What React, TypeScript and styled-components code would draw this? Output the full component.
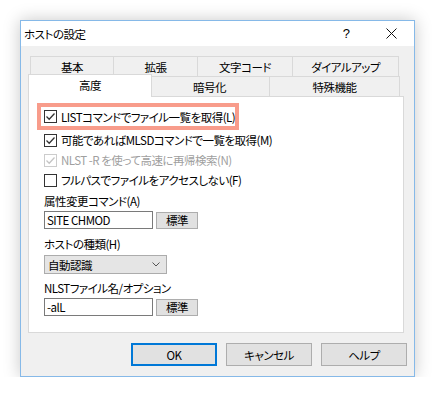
import styled, { createGlobalStyle } from 'styled-components';

const GlobalStyle = createGlobalStyle`
  html, body {
    margin: 0;
    background: #ffffff;
  }
  body {
    font-family: "Noto Sans CJK JP", "Noto Sans", sans-serif;
    font-size: 11.5px;
    letter-spacing: -0.5px;
    font-feature-settings: "palt";
    color: #000;
  }
`;

const rowOne = [
  { label: '基本', width: 84 },
  { label: '拡張', width: 85 },
  { label: '文字コード', width: 96 },
  { label: 'ダイアルアップ', width: 107 },
];

const rowTwo = [
  { label: '高度', width: 120, active: true },
  { label: '暗号化', width: 121 },
  { label: '特殊機能', width: 131 },
];

const checks = [
  { label: '可能であればMLSDコマンドで一覧を取得(M)', checked: true },
  { label: 'NLST -R を使って高速に再帰検索(N)', checked: true, disabled: true },
  { label: 'フルパスでファイルをアクセスしない(F)', checked: false },
];

function CheckBox(props: { checked: boolean; disabled?: boolean }) {
  return (
    <Box $disabled={props.disabled}>
      {props.checked && (
        <svg width="11" height="11" viewBox="0 0 11 11">
          <path
            d="M1.5 5.5 L4.2 8.2 L9.5 2.5"
            fill="none"
            stroke={props.disabled ? '#c4c4c4' : '#333'}
            strokeWidth="1.3"
          />
        </svg>
      )}
    </Box>
  );
}

function App() {
  return (
    <Page>
      <GlobalStyle />
      <Window>
        <TitleBar>
          <Title>ホストの設定</Title>
          <HelpButton>?</HelpButton>
          <CloseButton>
            <svg width="11" height="11" viewBox="0 0 11 11">
              <path d="M0.5 0.5 L10.5 10.5 M10.5 0.5 L0.5 10.5" stroke="#111" strokeWidth="1" />
            </svg>
          </CloseButton>
        </TitleBar>
        <Body>
          <TabStrip>
            <TabRow>
              {rowOne.map((t) => (
                <Tab key={t.label} $width={t.width}>
                  {t.label}
                </Tab>
              ))}
            </TabRow>
            <TabRow>
              {rowTwo.map((t) => (
                <Tab key={t.label} $width={t.width} $active={t.active}>
                  {t.label}
                </Tab>
              ))}
            </TabRow>
          </TabStrip>
          <Panel>
            <Highlight>
              <CheckRow>
                <CheckBox checked />
                <span>LISTコマンドでファイル一覧を取得(L)</span>
              </CheckRow>
            </Highlight>
            {checks.map((c) => (
              <CheckRow key={c.label} $disabled={c.disabled}>
                <CheckBox checked={c.checked} disabled={c.disabled} />
                <span>{c.label}</span>
              </CheckRow>
            ))}
            <FieldLabel $top={3}>属性変更コマンド(A)</FieldLabel>
            <FieldRow>
              <TextInput>SITE CHMOD</TextInput>
              <SmallButton>標準</SmallButton>
            </FieldRow>
            <FieldLabel $top={7}>ホストの種類(H)</FieldLabel>
            <Select>
              <span>自動認識</span>
              <svg width="8" height="5" viewBox="0 0 8 5">
                <path d="M0.5 0.5 L4 4 L7.5 0.5" fill="none" stroke="#555" strokeWidth="1" />
              </svg>
            </Select>
            <FieldLabel $top={6}>NLSTファイル名/オプション</FieldLabel>
            <FieldRow>
              <TextInput>-alL</TextInput>
              <SmallButton>標準</SmallButton>
            </FieldRow>
          </Panel>
          <ButtonBar>
            <DialogButton $primary>OK</DialogButton>
            <DialogButton>キャンセル</DialogButton>
            <DialogButton>ヘルプ</DialogButton>
          </ButtonBar>
        </Body>
      </Window>
    </Page>
  );
}

export default App;

const Page = styled.div`
  padding: 20px 0 0 20px;
`;

const Window = styled.div`
  width: 395px;
  height: 357px;
  box-sizing: border-box;
  border: 1px solid #86b9e8;
  background: #f0f0f0;
  box-shadow: 0 0 16px rgba(0, 0, 0, 0.22);
  display: flex;
  flex-direction: column;
`;

const TitleBar = styled.div`
  height: 25px;
  background: #ffffff;
  display: flex;
  align-items: center;
  padding-left: 3px;
`;

const Title = styled.span`
  font-size: 11.5px;
`;

const HelpButton = styled.span`
  margin-left: auto;
  width: 30px;
  text-align: center;
  font-family: "Liberation Sans", sans-serif;
  font-size: 13px;
`;

const CloseButton = styled.span`
  width: 30px;
  margin-left: 15px;
  margin-right: 8px;
  display: flex;
  justify-content: center;
`;

const Body = styled.div`
  flex: 1;
  display: flex;
  flex-direction: column;
  padding: 10px 10px 10px 7px;
`;

const TabStrip = styled.div`
  display: flex;
  flex-direction: column;
  padding: 0 2px;
`;

const TabRow = styled.div`
  display: flex;
  height: 20px;
`;

const Tab = styled.div<{ $width: number; $active?: boolean }>`
  box-sizing: border-box;
  width: ${(p) => p.$width}px;
  height: 20px;
  display: flex;
  align-items: center;
  justify-content: center;
  border: 1px solid #d9d9d9;
  border-bottom: none;
  margin-right: -1px;
  background: #f0f0f0;
  &:last-child {
    margin-right: 0;
  }
  ${(p) =>
    p.$active &&
    `
    position: relative;
    z-index: 1;
    background: #ffffff;
    width: ${p.$width + 4}px;
    height: 23px;
    margin: -2px -3px -1px -2px;
    padding-bottom: 2px;
  `}
`;

const Panel = styled.div`
  box-sizing: border-box;
  height: 237px;
  background: #ffffff;
  border: 1px solid #d9d9d9;
  padding: 6px 0 0 15px;
  display: flex;
  flex-direction: column;
  align-items: flex-start;
`;

const Highlight = styled.div`
  box-sizing: border-box;
  width: 202px;
  height: 27px;
  margin-left: -7px;
  padding-left: 3px;
  border: 4px solid #f89c8b;
  display: flex;
  align-items: center;
`;

const CheckRow = styled.div<{ $disabled?: boolean }>`
  height: 20px;
  display: flex;
  align-items: center;
  gap: 4px;
  color: ${(p) => (p.$disabled ? '#a0a0a0' : '#000')};
  white-space: nowrap;
`;

const Box = styled.span<{ $disabled?: boolean }>`
  box-sizing: border-box;
  width: 13px;
  height: 13px;
  border: 1px solid ${(p) => (p.$disabled ? '#cccccc' : '#333333')};
  background: #ffffff;
  display: flex;
  align-items: center;
  justify-content: center;
`;

const FieldLabel = styled.div<{ $top: number }>`
  margin-top: ${(p) => p.$top}px;
  line-height: 16px;
  white-space: nowrap;
`;

const FieldRow = styled.div`
  margin-top: 2px;
  display: flex;
  align-items: center;
  gap: 3px;
`;

const TextInput = styled.div`
  box-sizing: border-box;
  width: 109px;
  height: 18px;
  border: 1px solid #7a7a7a;
  background: #ffffff;
  padding-left: 2px;
  display: flex;
  align-items: center;
`;

const SmallButton = styled.div`
  box-sizing: border-box;
  width: 42px;
  height: 17px;
  border: 1px solid #adadad;
  background: #e1e1e1;
  display: flex;
  align-items: center;
  justify-content: center;
`;

const Select = styled.div`
  box-sizing: border-box;
  margin-top: 3px;
  width: 123px;
  height: 19px;
  border: 1px solid #acacac;
  background: #e5e5e5;
  padding: 0 6px 0 3px;
  display: flex;
  align-items: center;
  justify-content: space-between;
`;

const ButtonBar = styled.div`
  margin-top: auto;
  margin-right: -3px;
  display: flex;
  justify-content: flex-end;
  gap: 9px;
`;

const DialogButton = styled.div<{ $primary?: boolean }>`
  box-sizing: border-box;
  width: 86px;
  height: 23px;
  background: #e1e1e1;
  border: ${(p) => (p.$primary ? '2px solid #0078d7' : '1px solid #adadad')};
  display: flex;
  align-items: center;
  justify-content: center;
`;
